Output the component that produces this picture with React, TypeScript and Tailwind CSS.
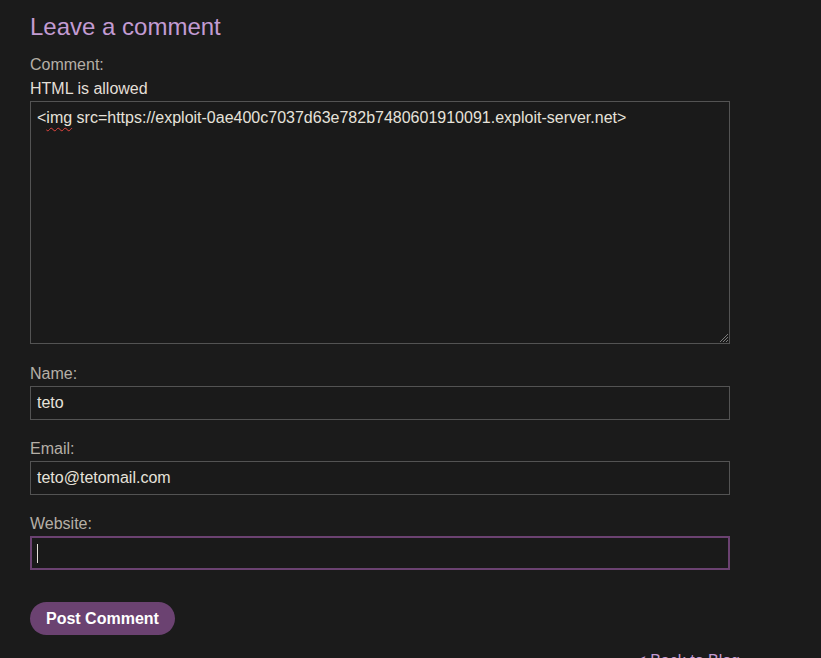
import React from 'react';

const labelCls = 'block text-[16px] leading-[24px] text-[#b5afa6]';
const inputCls =
  'h-[34px] w-[700px] border border-[#535353] bg-[#1a1a1a] px-[6px] text-[16px] leading-[32px] text-[#e6e2da]';

const App: React.FC = () => {
  return (
    <div className="min-h-[658px] bg-[#1b1b1b] font-['Liberation_Sans',Arial,sans-serif] overflow-hidden">
      <div className="ml-[30px] w-[700px] pt-[12px]">
        <h1 className="text-[24px] leading-[29px] text-[#c39bd3] mb-[12px]">Leave a comment</h1>

        <form onSubmit={(e) => e.preventDefault()}>
          <label className={labelCls}>Comment:</label>
          <div className="text-[16px] leading-[24px] text-[#e3dfd7]">HTML is allowed</div>

          {/* textarea look-alike so the spell-check squiggle can be drawn */}
          <div className="relative h-[243px] w-[700px] border border-[#535353] bg-[#1a1a1a] px-[6px] pt-[6px] text-[16px] leading-[20px] text-[#e6e2da] whitespace-nowrap">
            &lt;
            <span className="underline decoration-wavy decoration-[#e0443e] underline-offset-[4px] decoration-1">img</span>
            {' '}src=https://exploit-0ae400c7037d63e782b7480601910091.exploit-server.net&gt;
            <svg className="absolute right-0 bottom-0" width="11" height="11" viewBox="0 0 11 11">
              <path d="M10 2 L2 10 M10 5 L5 10 M10 8 L8 10" stroke="#7a7a7a" strokeWidth="1" />
            </svg>
          </div>

          <label className={`${labelCls} mt-[18px]`}>Name:</label>
          <div className={inputCls}>teto</div>

          <label className={`${labelCls} mt-[17px]`}>Email:</label>
          <div className={inputCls}>teto@tetomail.com</div>

          <label className={`${labelCls} mt-[17px]`}>Website:</label>
          <div className="flex h-[34px] w-[700px] items-center border-2 border-[#6b4271] bg-[#1a1a1a] px-[5px]">
            <span className="h-[19px] w-px bg-[#e6e2da]" />
          </div>

          <button
            type="submit"
            className="mt-[32px] h-[33px] rounded-full bg-[#6b4271] px-[16px] text-[16px] font-bold leading-[33px] text-white"
          >
            Post Comment
          </button>
        </form>

        <div className="mt-[14px] mr-[-10px] text-right text-[16px] leading-[24px] text-[#c39bd3]">
          <a href="#">&lt; Back to Blog</a>
        </div>
      </div>
    </div>
  );
};

export default App;
